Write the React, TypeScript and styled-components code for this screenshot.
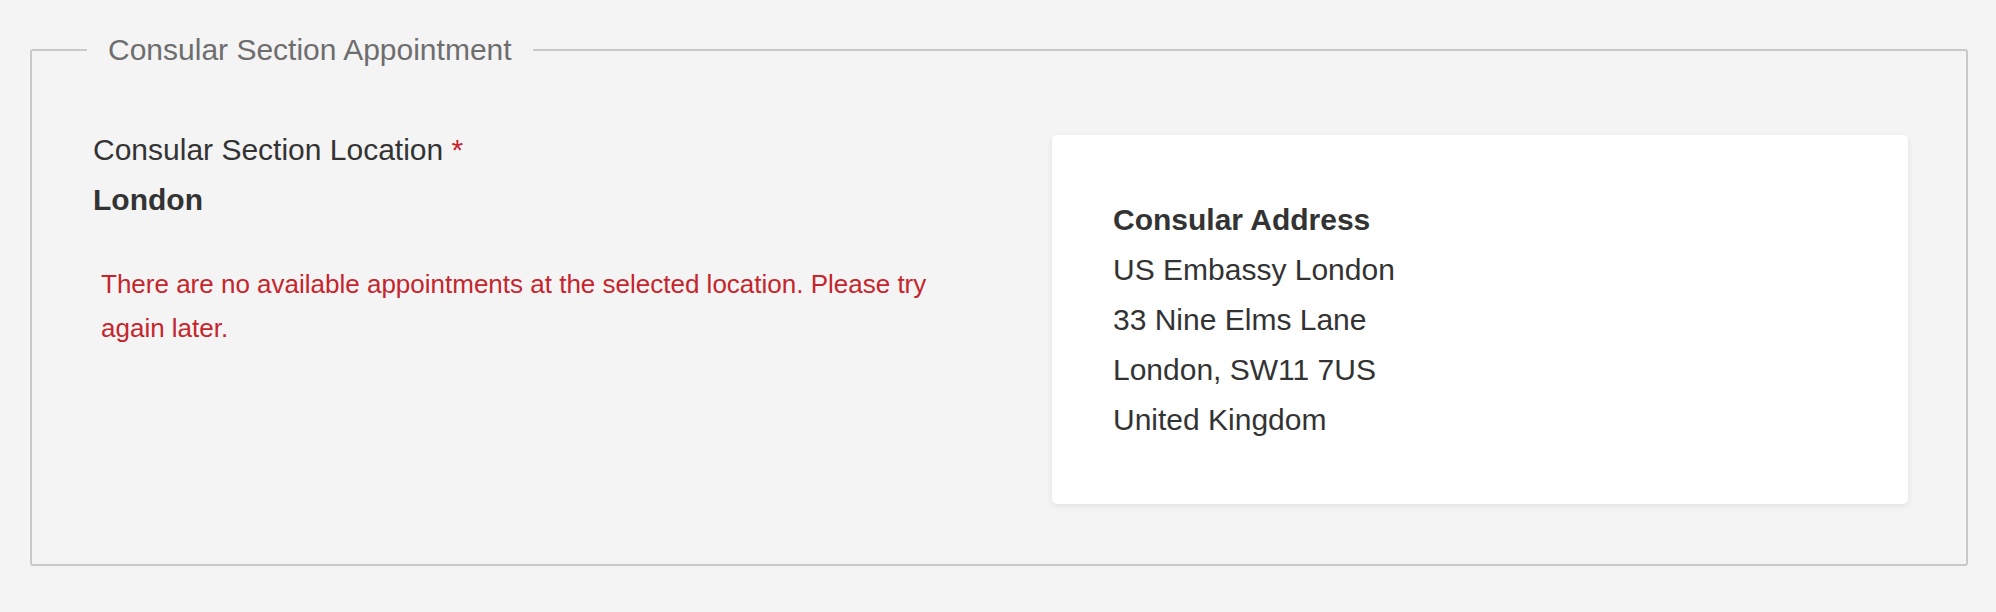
import * as React from "react";
import styled, { createGlobalStyle } from "styled-components";

const GlobalStyle = createGlobalStyle`
  html, body {
    margin: 0;
    padding: 0;
    background: #f4f4f4;
  }
  body {
    font-family: "Liberation Sans", Arial, Helvetica, sans-serif;
    color: #333333;
  }
`;

const Page = styled.div`
  padding: 33px 28px 0 30px;
  min-height: 612px;
  box-sizing: border-box;
`;

const Fieldset = styled.fieldset`
  margin: 0;
  padding: 58px 58px 60px 61px;
  border: 2px solid #c9c9c9;
  border-radius: 3px;
  min-width: 0;
`;

const Legend = styled.legend`
  margin-left: -6px;
  padding: 0 21px;
  font-size: 30px;
  line-height: 34px;
  color: #6e6e6e;
`;

const Row = styled.div`
  display: grid;
  grid-template-columns: 1fr 856px;
  column-gap: 64px;
  align-items: start;
`;

const Field = styled.div`
  display: flex;
  flex-direction: column;
`;

const Label = styled.label`
  font-size: 30px;
  line-height: 50px;
  color: #333333;
`;

const Required = styled.span`
  color: #c5252c;
`;

const Value = styled.div`
  font-size: 30px;
  line-height: 50px;
  font-weight: bold;
  color: #333333;
`;

const ErrorText = styled.p`
  margin: 37px 0 0;
  padding-left: 8px;
  font-size: 26px;
  line-height: 44px;
  color: #c5252c;
`;

const Card = styled.div`
  margin-top: 10px;
  background: #ffffff;
  border-radius: 5px;
  box-shadow: 0 2px 6px rgba(0, 0, 0, 0.08);
  padding: 60px 60px 59px 61px;
`;

const Line = styled.div<{ $bold?: boolean }>`
  font-size: 30px;
  line-height: 50px;
  font-weight: ${(p) => (p.$bold ? "bold" : "normal")};
  color: #333333;
`;

const address = [
  "US Embassy London",
  "33 Nine Elms Lane",
  "London, SW11 7US",
  "United Kingdom",
];

export default function App() {
  return (
    <Page>
      <GlobalStyle />
      <Fieldset>
        <Legend>Consular Section Appointment</Legend>
        <Row>
          <Field>
            <Label>
              Consular Section Location <Required>*</Required>
            </Label>
            <Value>London</Value>
            <ErrorText>
              There are no available appointments at the selected location.
              Please try again later.
            </ErrorText>
          </Field>
          <Card>
            <Line $bold>Consular Address</Line>
            {address.map((line) => (
              <Line key={line}>{line}</Line>
            ))}
          </Card>
        </Row>
      </Fieldset>
    </Page>
  );
}
